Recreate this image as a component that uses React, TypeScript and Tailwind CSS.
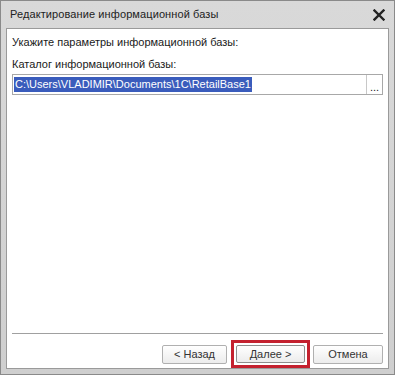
export default function App() {
  return (
    <div
      className="w-[395px] h-[375px] flex flex-col bg-gradient-to-b from-[#d9d9d9] to-[#cfcfcf] border border-[#8a8a8a]"
      style={{ fontFamily: '"Liberation Sans", Arial, sans-serif' }}
    >
      {/* title bar */}
      <div className="h-[27px] flex items-center justify-between pl-[9px] pr-[9px] shrink-0">
        <span className="text-[11px] text-[#222] tracking-[0.1px]">
          Редактирование информационной базы
        </span>
        <svg width="12" height="12" viewBox="0 0 12 12" className="mt-[1px]">
          <path d="M1.5 1.5 L10.5 10.5 M10.5 1.5 L1.5 10.5" stroke="#222" strokeWidth="2.4" strokeLinecap="square" />
        </svg>
      </div>

      {/* client area */}
      <div className="flex-1 mx-[5px] mb-[5px] border border-[#9a9a9a] bg-white flex flex-col px-[5px]">
        <div className="pt-[6px] text-[11px] text-[#1a1a1a] leading-[14px]">Укажите параметры информационной базы:</div>
        <div className="pt-[8px] text-[11px] text-[#1a1a1a] leading-[14px]">Каталог информационной базы:</div>
        <div className="mt-[3px] h-[21px] flex border border-[#a8a8a8]">
          <div className="flex-1 flex items-center pl-[1px]">
            <span className="bg-[#3a5cbc] text-white text-[11px] leading-[15px] px-[1px]">
              C:\Users\VLADIMIR\Documents\1C\RetailBase1
            </span>
          </div>
          <div className="w-[16px] border-l border-[#c8c8c8] flex items-end justify-center pb-[3px] text-[11px] leading-[8px] text-[#222]">
            ...
          </div>
        </div>

        <div className="flex-1" />

        <div className="h-px bg-[#a0a0a0]" />

        <div className="mt-[6px] flex justify-end items-center gap-[1px] text-[11px] text-[#333]">
          <button className="w-[65px] h-[19px] border border-[#b0b0b0] rounded-[2px] bg-gradient-to-b from-[#ffffff] to-[#ececec] mr-[3px]">
            &lt; Назад
          </button>
          <div className="border-[3px] border-[#c4212f] p-[2px]">
            <button className="w-[69px] h-[18px] border border-[#8e8e8e] rounded-[2px] bg-gradient-to-b from-[#ffffff] to-[#ececec] block">
              Далее &gt;
            </button>
          </div>
          <button className="w-[70px] h-[19px] border border-[#b0b0b0] rounded-[2px] bg-gradient-to-b from-[#ffffff] to-[#ececec] ml-[2px]">
            Отмена
          </button>
        </div>
      </div>
    </div>
  );
}
